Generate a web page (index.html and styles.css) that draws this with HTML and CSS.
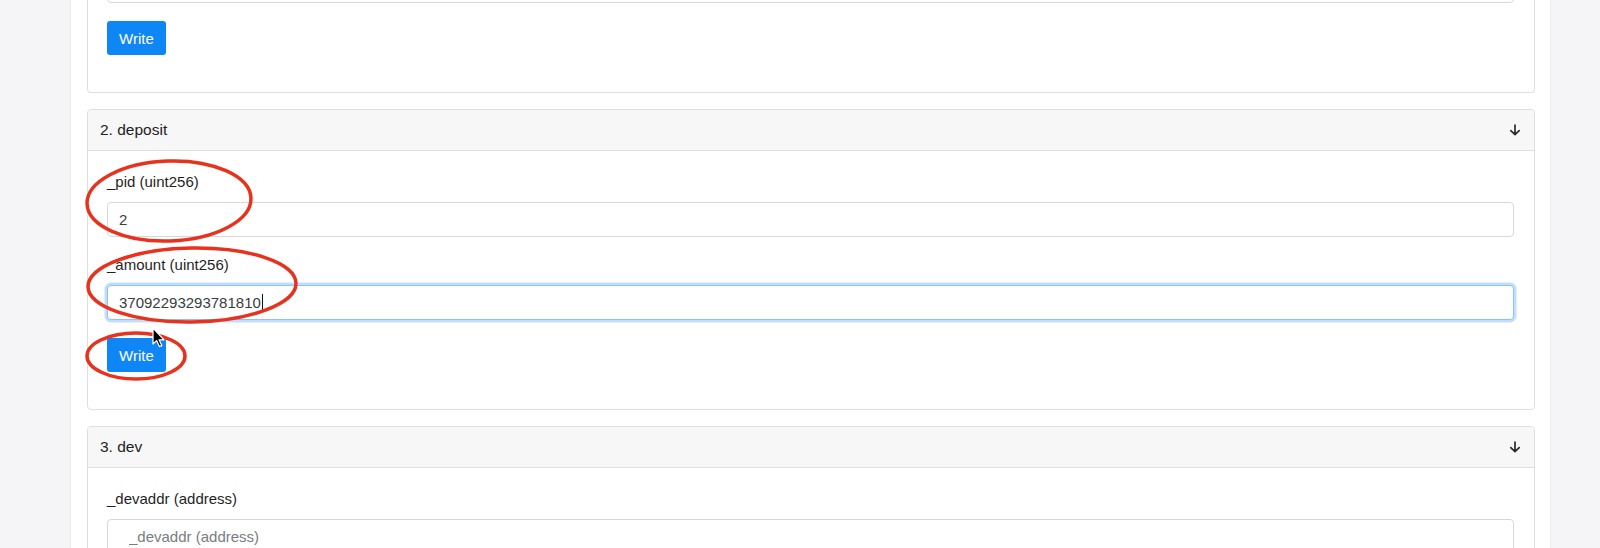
FILE: index.html
```html
<!DOCTYPE html>
<html lang="en">
<head>
<meta charset="utf-8">
<title>Write Contract</title>
<link rel="stylesheet" href="styles.css">
</head>
<body>
<div class="page">
  <div class="container">
    <div class="stack">
      <section class="card card--cut">
        <div class="card-body card-body--cut">
          <div class="form-group">
            <input class="form-control" aria-label="_withUpdate (bool)">
          </div>
          <button class="btn">Write</button>
        </div>
      </section>

      <section class="card">
        <div class="card-header">
          <span>2. deposit</span>
          <svg class="arrow" viewBox="0 0 12 12" width="12" height="12"><path d="M6 1 V10.5 M1.8 6.6 L6 10.6 L10.2 6.6" /></svg>
        </div>
        <div class="card-body">
          <div class="form-group">
            <label class="label">_pid (uint256)</label>
            <input class="form-control" value="2">
          </div>
          <div class="form-group">
            <label class="label">_amount (uint256)</label>
            <div class="form-control is-focused">37092293293781810<span class="caret"></span></div>
          </div>
          <button class="btn">Write</button>
        </div>
      </section>

      <section class="card">
        <div class="card-header">
          <span>3. dev</span>
          <svg class="arrow" viewBox="0 0 12 12" width="12" height="12"><path d="M6 1 V10.5 M1.8 6.6 L6 10.6 L10.2 6.6" /></svg>
        </div>
        <div class="card-body">
          <div class="form-group">
            <label class="label">_devaddr (address)</label>
            <input class="form-control form-control--indent" placeholder="_devaddr (address)">
          </div>
          <button class="btn">Write</button>
        </div>
      </section>
    </div>
  </div>

  <svg class="annotations" width="1600" height="548" viewBox="0 0 1600 548">
    <ellipse class="mark" cx="169" cy="201" rx="82" ry="40" transform="rotate(-2 169 201)"/>
    <ellipse class="mark" cx="192" cy="285" rx="104" ry="37" transform="rotate(-1 192 285)"/>
    <ellipse class="mark" cx="136" cy="356" rx="49" ry="23"/>
    <path class="cursor" d="M153 328 L153 344 L156.6 340.6 L159.4 346.6 L161.8 345.6 L159 339.8 L164 339.8 Z"/>
  </svg>
</div>
</body>
</html>
```

FILE: styles.css
```css
html, body {
  margin: 0;
  padding: 0;
  height: 100%;
  overflow: hidden;
}

body {
  background: #f5f5f7;
  font-family: "Liberation Sans", Arial, Helvetica, sans-serif;
  font-size: 15px;
  color: #212529;
}

.page {
  position: relative;
  width: 1600px;
  height: 548px;
  overflow: hidden;
}

.container {
  box-sizing: border-box;
  display: flow-root;
  margin-left: 70px;
  width: 1481px;
  height: 100%;
  padding: 0 15px 0 16px;
  background: #ffffff;
  border-left: 1px solid #ececee;
  border-right: 1px solid #ececee;
}

.stack {
  margin-top: -32px;
  display: flex;
  flex-direction: column;
  gap: 16px;
}

.card {
  border: 1px solid #dfdfdf;
  border-radius: 4px;
  background: #fff;
}

.card--cut {
  border-top: none;
  border-radius: 0 0 4px 4px;
}

.card-header {
  height: 41px;
  box-sizing: border-box;
  padding: 0 13px 0 12px;
  display: flex;
  align-items: center;
  justify-content: space-between;
  background: #f7f7f8;
  border-bottom: 1px solid #dfdfdf;
  border-radius: 4px 4px 0 0;
  font-size: 15.5px;
  line-height: 22px;
  color: #222;
}

.arrow {
  fill: none;
  stroke: #2b2b2b;
  stroke-width: 1.7;
  stroke-linecap: round;
  stroke-linejoin: round;
}

.card-body {
  padding: 20px 20px 37px 19px;
}

.card-body--cut {
  padding-top: 0;
}

.form-group {
  display: flex;
  flex-direction: column;
  margin-bottom: 17px;
}

.label {
  line-height: 22px;
  margin-bottom: 9px;
  color: #1f1f1f;
}

.form-control {
  box-sizing: border-box;
  height: 35px;
  width: 100%;
  padding: 0 11px;
  border: 1px solid #d6d8da;
  border-radius: 4px;
  font-family: inherit;
  font-size: 15px;
  color: #3a3d40;
  background: #fff;
  outline: none;
  display: flex;
  align-items: center;
}

.form-control::placeholder {
  color: #7a7d80;
}

.form-control--indent {
  padding-left: 21px;
}

.form-control.is-focused {
  border-color: #8cc2f8;
  box-shadow: 0 0 0 2.5px rgba(80, 160, 245, 0.35);
}

.caret {
  display: inline-block;
  width: 1px;
  height: 18px;
  background: #111;
  margin-left: 1px;
}

.btn {
  margin-top: 1px;
  height: 34px;
  padding: 0 12px;
  border: none;
  border-radius: 3px;
  background: #0f86f5;
  color: #fff;
  font-family: inherit;
  font-size: 15px;
  cursor: pointer;
}

.annotations {
  position: absolute;
  top: 0;
  left: 0;
  pointer-events: none;
}

.mark {
  fill: none;
  stroke: #e8321d;
  stroke-width: 3.5;
}

.cursor {
  fill: #000;
  stroke: #fff;
  stroke-width: 1.2;
  stroke-linejoin: round;
}
```
